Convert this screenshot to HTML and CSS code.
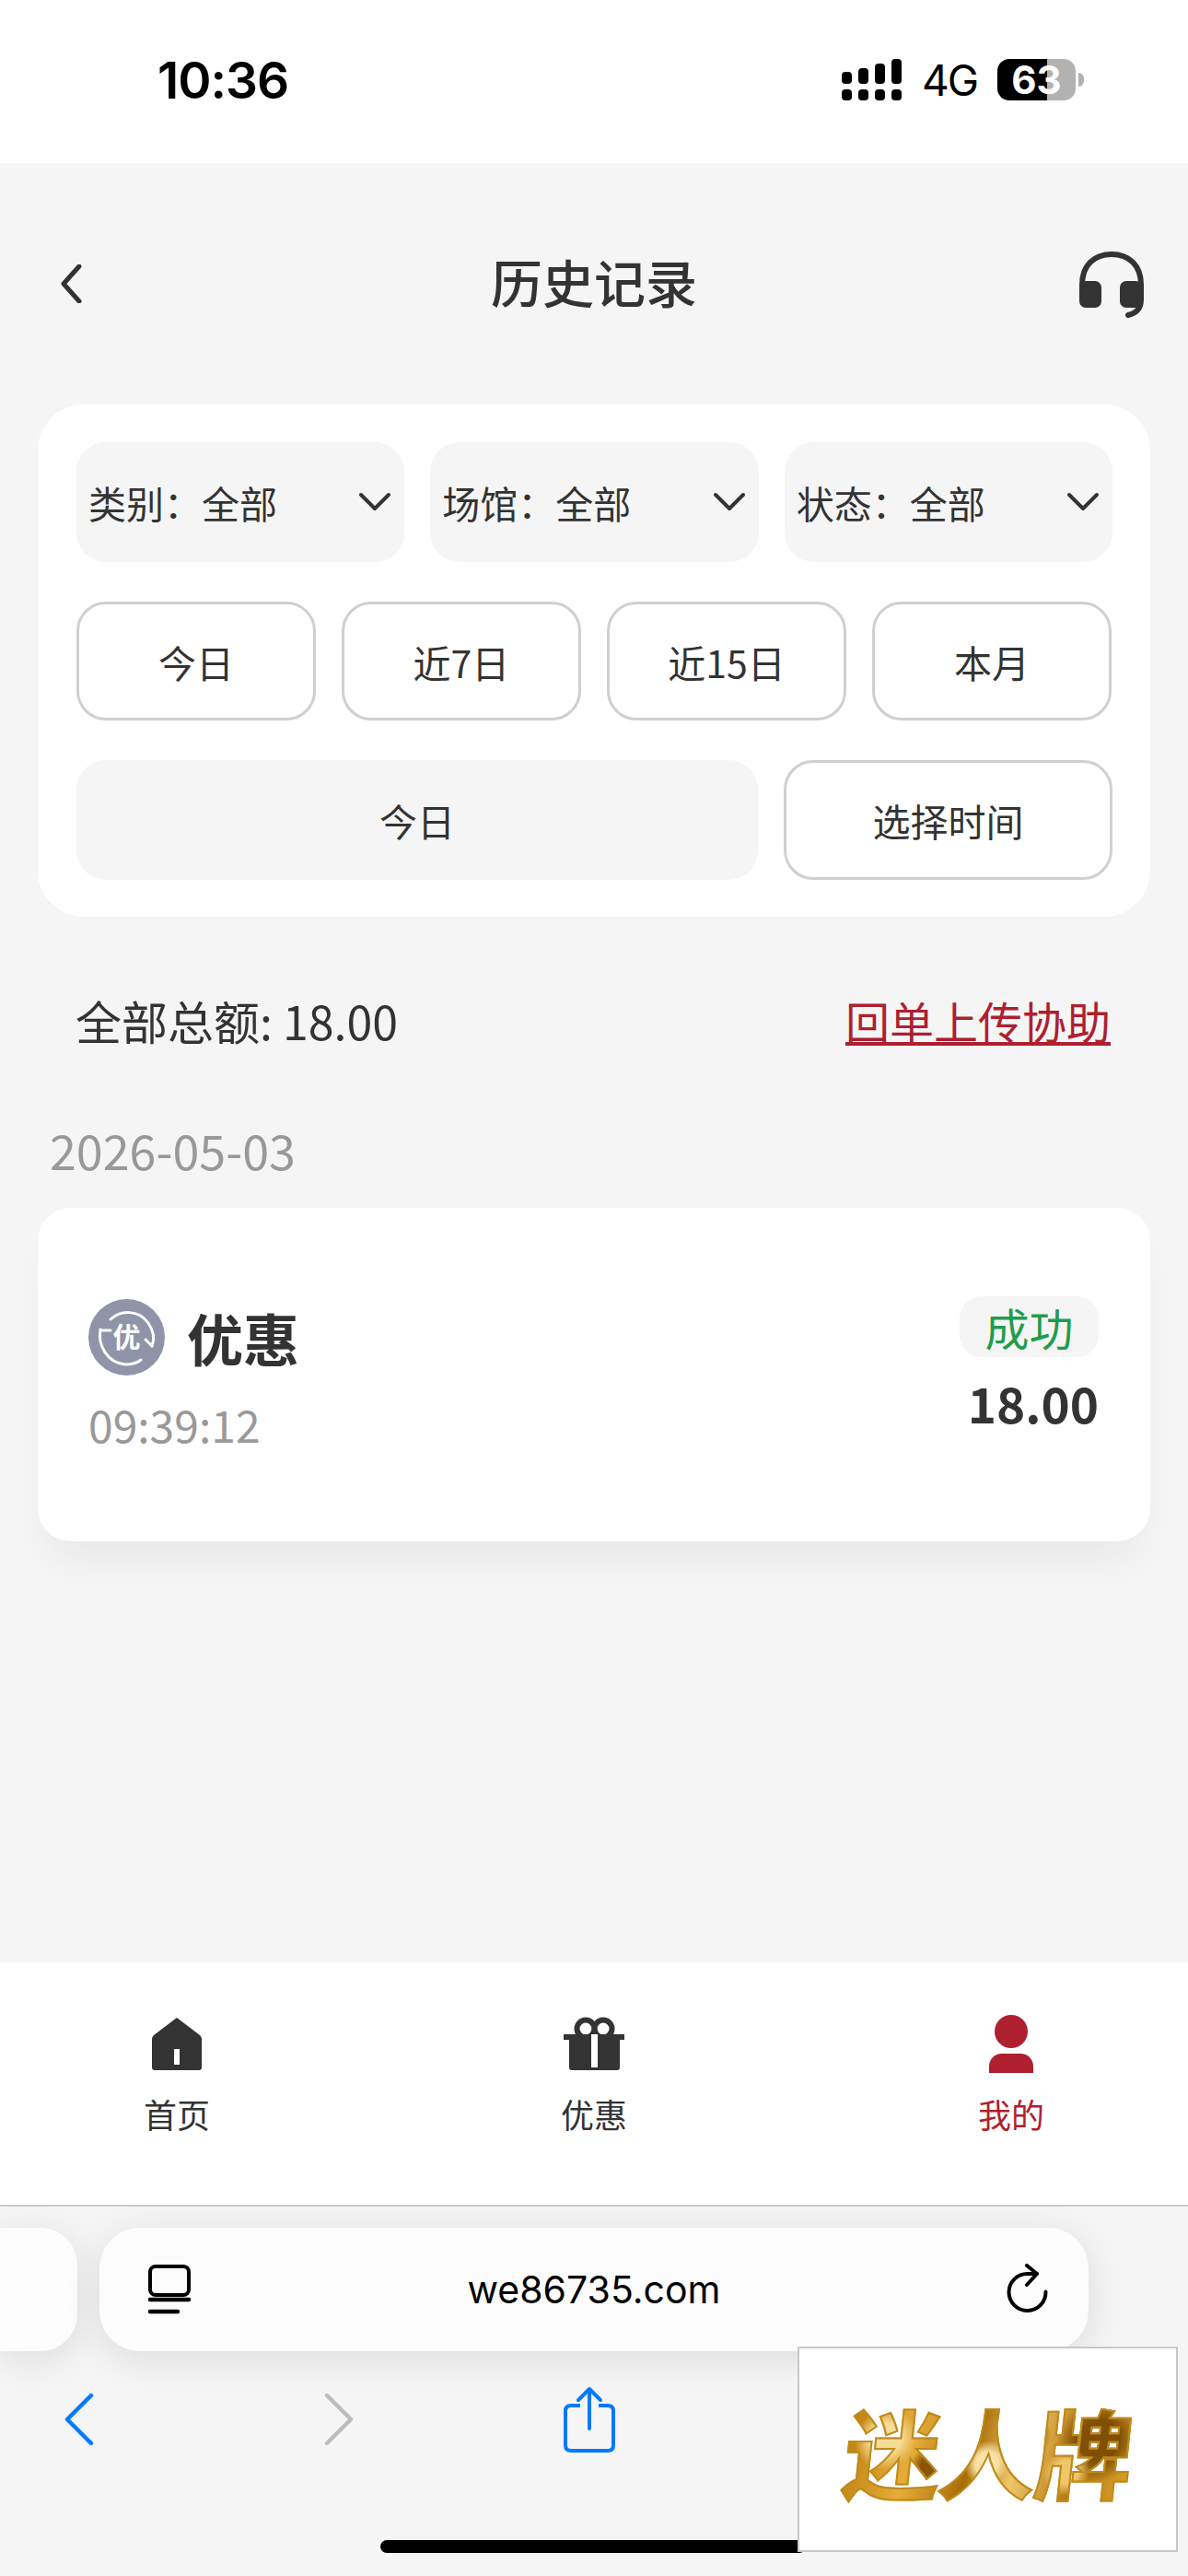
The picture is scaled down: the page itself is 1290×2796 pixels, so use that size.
FILE: index.html
```html
<!DOCTYPE html>
<html>
<head>
  <title>历史记录</title>
  <meta name="viewport" content="width=device-width, initial-scale=1.0">
  <link rel="stylesheet" href="styles.css">
</head>
<body>
  <div class="status-bar">
    <span class="clock">10:36</span>
    <div class="status-right">
      <svg class="signal" width="65" height="45" viewBox="0 0 65 45">
        <rect x="0" y="14" width="11" height="13" rx="4"/>
        <rect x="18" y="10" width="11" height="17" rx="4"/>
        <rect x="36" y="5" width="11" height="22" rx="4"/>
        <rect x="54" y="0" width="11" height="27" rx="4"/>
        <rect x="0" y="33" width="11" height="12" rx="4"/>
        <rect x="18" y="33" width="11" height="12" rx="4"/>
        <rect x="36" y="33" width="11" height="12" rx="4"/>
        <rect x="54" y="33" width="11" height="12" rx="4"/>
      </svg>
      <span class="network">4G</span>
      <div class="battery"><span>63</span></div>
      <div class="battery-tip"></div>
    </div>
  </div>

  <div class="main">
    <div class="nav">
      <svg class="nav-back" width="24" height="42" viewBox="0 0 24 42">
        <path d="M21 2 L4 21 L21 40" fill="none" stroke="#333" stroke-width="5" stroke-linecap="round" stroke-linejoin="round"/>
      </svg>
      <h1>历史记录</h1>
      <svg class="nav-service" width="72" height="72" viewBox="0 0 72 72">
        <path d="M4 44 V36 C4 15 17 3 36 3 C55 3 68 15 68 36 V52 C68 61 63 67 54 69" fill="none" stroke="#333" stroke-width="6" stroke-linecap="round"/>
        <rect x="1" y="32" width="24" height="29" rx="7" fill="#333"/>
        <rect x="45" y="32" width="24" height="29" rx="7" fill="#333"/>
      </svg>
    </div>

    <div class="filter-card">
      <div class="filter-row">
        <div class="select">类别：全部<svg width="36" height="22" viewBox="0 0 36 22"><path d="M3 3 L18 18 L33 3" fill="none" stroke="#333" stroke-width="4" stroke-linecap="round" stroke-linejoin="round"/></svg></div>
        <div class="select">场馆：全部<svg width="36" height="22" viewBox="0 0 36 22"><path d="M3 3 L18 18 L33 3" fill="none" stroke="#333" stroke-width="4" stroke-linecap="round" stroke-linejoin="round"/></svg></div>
        <div class="select">状态：全部<svg width="36" height="22" viewBox="0 0 36 22"><path d="M3 3 L18 18 L33 3" fill="none" stroke="#333" stroke-width="4" stroke-linecap="round" stroke-linejoin="round"/></svg></div>
      </div>
      <div class="filter-row date-row">
        <div class="pill">今日</div>
        <div class="pill">近7日</div>
        <div class="pill">近15日</div>
        <div class="pill">本月</div>
      </div>
      <div class="filter-row">
        <div class="range">今日</div>
        <div class="pill pick-time">选择时间</div>
      </div>
    </div>

    <div class="summary">
      <span class="total">全部总额: 18.00</span>
      <a class="help-link">回单上传协助</a>
    </div>

    <div class="day-label">2026-05-03</div>

    <div class="record">
      <div class="record-left">
        <div class="record-title">
          <svg class="promo-icon" width="83" height="83" viewBox="0 0 83 83">
            <circle cx="41.5" cy="41.5" r="41.5" fill="#8f94a8"/>
            <path d="M24 22 C36 11 55 12 65 26 C71 35 72 44 69 51 M13 33 C10 50 20 69 40 71 C47 71 52 70 57 66" fill="none" stroke="#fff" stroke-width="3" stroke-linecap="round"/>
            <path d="M14 34 L24 34 M69 51 L62 44" fill="none" stroke="#fff" stroke-width="3" stroke-linecap="round"/>
            <text class="promo-glyph" x="41.5" y="52" text-anchor="middle">优</text>
          </svg>
          <span>优惠</span>
        </div>
        <div class="record-time">09:39:12</div>
      </div>
      <div class="record-right">
        <div class="badge">成功</div>
        <div class="amount">18.00</div>
      </div>
    </div>
  </div>

  <div class="tabbar">
    <div class="tab">
      <svg width="54" height="63" viewBox="0 0 54 63">
        <path d="M27 3 L52 22 Q54 24 54 26 V57 Q54 60 51 60 H3 Q0 60 0 57 V26 Q0 24 2 22 Z" fill="#333"/>
        <rect x="24" y="37" width="6" height="17" fill="#fff"/>
      </svg>
      <span>首页</span>
    </div>
    <div class="tab">
      <svg width="66" height="63" viewBox="0 0 66 63">
        <circle cx="24" cy="15" r="9.5" fill="none" stroke="#333" stroke-width="6"/>
        <circle cx="43" cy="15" r="9.5" fill="none" stroke="#333" stroke-width="6"/>
        <rect x="0" y="21" width="66" height="6" fill="#333"/>
        <path d="M6 27 H61 V57 Q61 60 58 60 H9 Q6 60 6 57 Z" fill="#333"/>
        <rect x="30" y="21" width="7" height="36" fill="#fff"/>
      </svg>
      <span>优惠</span>
    </div>
    <div class="tab tab-active">
      <svg width="50" height="63" viewBox="0 0 50 63">
        <circle cx="25" cy="18" r="18" fill="#ae1f30"/>
        <path d="M1 63 V56 C1 48 7 42 15 42 H35 C43 42 49 48 49 56 V63 Z" fill="#ae1f30"/>
      </svg>
      <span>我的</span>
    </div>
  </div>

  <div class="browser">
    <div class="url-row">
      <div class="tab-peek"></div>
      <div class="url-bar">
        <svg class="url-tabs" width="46" height="54" viewBox="0 0 46 54">
          <rect x="2" y="2" width="42" height="31" rx="6" fill="none" stroke="#000" stroke-width="4"/>
          <path d="M2 38 H44 M2 51 H32" fill="none" stroke="#000" stroke-width="4.5" stroke-linecap="round"/>
        </svg>
        <span class="url-text">we86735.com</span>
        <svg class="url-reload" width="46" height="56" viewBox="0 0 46 56">
          <path d="M34 11 H24 A20 20 0 1 0 43.5 30.5" fill="none" stroke="#000" stroke-width="4" stroke-linecap="round"/>
          <path d="M23 2 L34 11 L23 23" fill="none" stroke="#000" stroke-width="4" stroke-linecap="round" stroke-linejoin="round"/>
        </svg>
      </div>
    </div>
    <div class="toolbar">
      <svg width="32" height="56" viewBox="0 0 32 56">
        <path d="M29 2 L3 28 L29 54" fill="none" stroke="#007aff" stroke-width="4.5" stroke-linecap="round" stroke-linejoin="round"/>
      </svg>
      <svg class="tool-forward" width="32" height="56" viewBox="0 0 32 56">
        <path d="M3 2 L29 28 L3 54" fill="none" stroke="#bdbdbd" stroke-width="4.5" stroke-linecap="round" stroke-linejoin="round"/>
      </svg>
      <svg class="tool-share" width="56" height="72" viewBox="0 0 56 72">
        <path d="M18 21 H8 Q2 21 2 27 V64 Q2 70 8 70 H48 Q54 70 54 64 V27 Q54 21 48 21 H38" fill="none" stroke="#007aff" stroke-width="4"/>
        <path d="M28 46 V3 M16 15 L28 3 L40 15" fill="none" stroke="#007aff" stroke-width="4" stroke-linecap="round" stroke-linejoin="round"/>
      </svg>
    </div>
    <div class="home-bar"></div>
    <div class="logo-box"><span>迷人牌</span></div>
  </div>
</body>
</html>
```

FILE: styles.css
```css
* { box-sizing: border-box; }
html, body { margin: 0; padding: 0; }
body { width: 1290px; height: 2796px; display: flex; flex-direction: column; background: #f5f5f5; color: #333; font-family: "Noto Sans CJK SC", "Noto Sans", sans-serif; overflow: hidden; }
svg { display: block; flex-shrink: 0; }

/* status bar */
.status-bar { height: 177px; background: #fff; display: flex; justify-content: space-between; padding: 56px 113px 0 171px; color: #000; }
.clock { font-family: Inter, sans-serif; font-weight: 600; font-size: 55px; line-height: 62px; letter-spacing: -1px; }
.status-right { display: flex; align-items: flex-start; padding-top: 8px; }
.network { font-family: Inter, sans-serif; font-size: 46px; line-height: 46px; letter-spacing: -2px; margin-left: 22px; }
.battery { width: 85px; height: 45px; border-radius: 13px; margin-left: 22px; background: linear-gradient(90deg, #000 0 54px, #b2b2b2 54px); color: #fff; font-family: Inter, sans-serif; font-weight: 700; font-size: 42px; line-height: 45px; text-align: center; }
.battery-tip { width: 6px; height: 15px; margin: 15px 0 0 3px; background: #b2b2b2; border-radius: 0 8px 8px 0; }

/* header */
.main { flex: 1; }
.nav { height: 262px; display: grid; grid-template-columns: 1fr auto 1fr; align-items: center; padding: 0 47px 6px; }
.nav h1 { margin: 0; font-size: 56px; font-weight: 500; line-height: 80px; }
.nav-back { margin: 6px 0 0 18px; }
.nav-service { margin-top: 8px; justify-self: end; }

/* filter card */
.filter-card { margin: 0 41px; background: #fff; border-radius: 50px; padding: 41px 41px 40px 42px; display: flex; flex-direction: column; gap: 43px; height: 556px; }
.filter-row { display: flex; gap: 28px; height: 130px; }
.date-row { padding-right: 1px; }
.select { flex: 1; background: #f5f5f5; border-radius: 32px; display: flex; align-items: center; justify-content: space-between; padding: 0 14px 0 13px; font-size: 41px; }
.pill { flex: 1; border: 3px solid #d0d0d0; border-radius: 32px; display: flex; align-items: center; justify-content: center; font-size: 41px; }
.range { flex: 1; background: #f5f5f5; border-radius: 32px; display: flex; align-items: center; justify-content: center; font-size: 41px; }
.pick-time { flex: 0 0 357px; }

/* totals */
.summary { margin-top: 52px; height: 120px; padding: 0 84px 0 82px; display: flex; align-items: center; justify-content: space-between; font-size: 48px; }
.total { font-size: 50px; }
.help-link { color: #ae1f30; text-decoration: underline; }
.day-label { margin-top: 51px; padding-left: 54px; color: #999; font-size: 52px; line-height: 60px; }

/* record card */
.record { margin: 33px 41px 0; height: 362px; background: #fff; border-radius: 36px; padding: 96px 56px 0 55px; display: flex; justify-content: space-between; box-shadow: 0 30px 40px -10px rgba(0, 0, 0, 0.05); }
.record-left { padding-top: 3px; }
.record-title { display: flex; align-items: center; gap: 24px; font-size: 61px; font-weight: 700; line-height: 83px; }
.promo-glyph { font-size: 30px; fill: #fff; font-family: "Noto Sans CJK SC", sans-serif; }
.record-time { margin-top: 17px; color: #999; font-size: 48px; line-height: 70px; }
.record-right { display: flex; flex-direction: column; align-items: flex-end; }
.badge { width: 151px; height: 66px; border-radius: 24px; background: #f5f5f5; color: #1f9d4d; font-size: 48px; line-height: 66px; text-align: center; }
.amount { margin-top: 9px; font-size: 53px; font-weight: 700; line-height: 80px; }

/* bottom tabs */
.tabbar { height: 265px; background: #fff; border-bottom: 2px solid #ccc; display: flex; justify-content: center; gap: 253px; padding-top: 57px; }
.tab { width: 200px; height: 130px; display: flex; flex-direction: column; align-items: center; font-size: 36px; }
.tab svg { height: 63px; }
.tab span { margin-top: 19px; line-height: 50px; }
.tab-active { color: #ae1f30; }

/* browser chrome */
.browser { height: 401px; background: #f5f5f5; position: relative; }
.url-row { display: flex; gap: 24px; padding-top: 23px; }
.tab-peek { width: 84px; height: 134px; background: #fcfcfc; border-radius: 0 40px 40px 0; box-shadow: 0 8px 40px rgba(0, 0, 0, 0.1); }
.url-bar { width: 1074px; height: 134px; background: #fcfcfc; border-radius: 44px; box-shadow: 0 8px 40px rgba(0, 0, 0, 0.1); display: grid; grid-template-columns: 1fr auto 1fr; align-items: center; padding: 0 44px; }
.url-tabs { margin-left: 9px; }
.url-reload { justify-self: end; }
.url-text { font-family: Inter, sans-serif; font-size: 41px; color: #000; }
.toolbar { display: flex; align-items: center; height: 72px; margin-top: 38px; padding-left: 70px; }
.tool-forward { margin-left: 250px; }
.tool-share { margin-left: 228px; }

/* floats over the toolbar */
.home-bar { position: absolute; left: 413px; top: 362px; width: 462px; height: 14px; border-radius: 7px; background: #000; }
.logo-box { position: absolute; left: 866px; top: 152px; width: 413px; height: 223px; background: #fff; border: 2px solid #c8c8c8; display: flex; align-items: center; justify-content: center; }
.logo-box span { font-size: 106px; font-weight: 700; line-height: 120px; letter-spacing: -2px; transform: skewX(-6deg); color: transparent; -webkit-text-stroke: 2px #c08a1c; background: radial-gradient(circle at 14% 40%, #f6dc96 0 6%, transparent 12%), radial-gradient(circle at 30% 65%, #8a5606 0 4%, transparent 9%), radial-gradient(circle at 50% 62%, #f8e2a6 0 7%, transparent 14%), radial-gradient(circle at 64% 38%, #a66c08 0 5%, transparent 11%), radial-gradient(circle at 78% 70%, #efc66a 0 5%, transparent 10%), radial-gradient(circle at 88% 42%, #7f4f06 0 8%, transparent 16%), linear-gradient(100deg, #b97c0c, #e5ad38 25%, #a96d08 45%, #efc66a 60%, #b57a10 80%, #d9a02c); -webkit-background-clip: text; background-clip: text; }
```
